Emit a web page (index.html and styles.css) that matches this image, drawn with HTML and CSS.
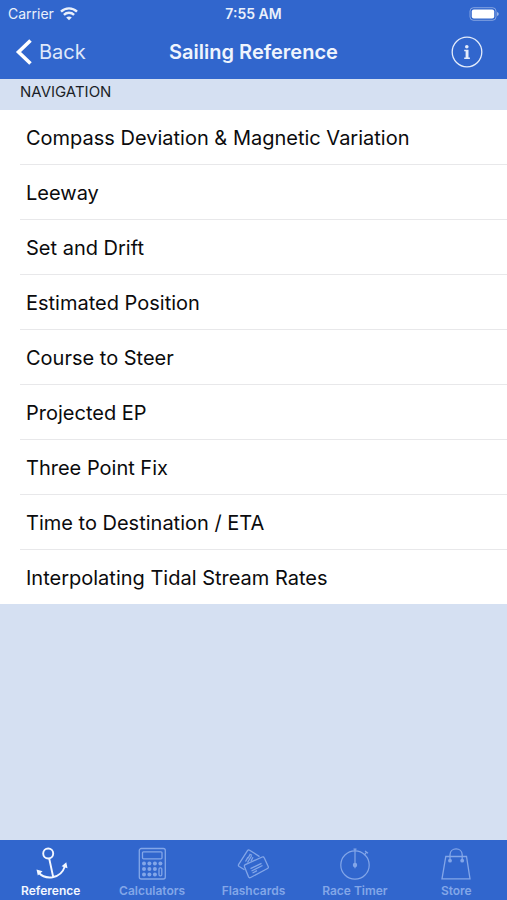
FILE: index.html
```html
<!DOCTYPE html>
<html lang="en">
<head>
<meta charset="utf-8">
<meta name="viewport" content="width=device-width, initial-scale=1">
<title>Sailing Reference</title>
<link rel="stylesheet" href="styles.css">
</head>
<body>
<header class="top">
  <div class="status">
    <div class="carrier">
      <span>Carrier</span>
      <svg width="18" height="14" viewBox="0 0 18 14" fill="none" stroke="currentColor" stroke-width="2.4" aria-hidden="true">
        <path d="M1 4.700C5.500.3 12.500.3 17 4.700"/>
        <path d="M3.900 7.900C6.800 5.100 11.200 5.100 14.100 7.900"/>
        <path d="M9 13.300 6.200 10.500C7.700 9 10.300 9 11.800 10.500Z" fill="currentColor" stroke="none"/>
      </svg>
    </div>
    <span class="time">7:55 AM</span>
    <svg class="battery" width="31" height="14" viewBox="0 0 31 14" aria-hidden="true">
      <rect x="2" y=".7" width="26" height="12.600" rx="3.500" fill="none" stroke="#fff" stroke-opacity=".4"/>
      <rect x="3.800" y="2.500" width="22.400" height="9" rx="2" fill="#fff"/>
      <path d="M29 5v4q1.800-.6 1.800-2t-1.800-2Z" fill="#fff" fill-opacity=".5"/>
    </svg>
  </div>
  <nav class="bar" aria-label="Page">
    <button class="back" type="button">
      <svg width="18" height="28" viewBox="0 0 18 28" fill="none" stroke="currentColor" stroke-width="3.600" aria-hidden="true"><path d="M15.500 2.500 3.500 14l12 11.500"/></svg>
      <span>Back</span>
    </button>
    <h1>Sailing Reference</h1>
    <button class="info" type="button" aria-label="Information">
      <svg width="32" height="32" viewBox="0 0 32 32" aria-hidden="true">
        <circle cx="16" cy="16" r="14.800" fill="none" stroke="currentColor" stroke-width="1.300"/>
        <circle cx="15.800" cy="10.700" r="1.800" fill="currentColor"/>
        <path d="M13.200 13.800h4.300v7.700h1.400v1.400h-5.700v-1.400h1.400v-6.300h-1.400Z" fill="currentColor"/>
      </svg>
    </button>
  </nav>
</header>
<main>
  <h2>NAVIGATION</h2>
  <ul class="topics">
    <li><a href="#">Compass Deviation &amp; Magnetic Variation</a></li>
    <li><a href="#">Leeway</a></li>
    <li><a href="#">Set and Drift</a></li>
    <li><a href="#">Estimated Position</a></li>
    <li><a href="#">Course to Steer</a></li>
    <li><a href="#">Projected EP</a></li>
    <li><a href="#">Three Point Fix</a></li>
    <li><a href="#">Time to Destination / ETA</a></li>
    <li><a href="#">Interpolating Tidal Stream Rates</a></li>
  </ul>
</main>
<nav class="tabs" aria-label="Sections">
  <a class="tab active" href="#" aria-current="page">
    <svg width="34" height="34" viewBox="0 0 34 34" fill="none" stroke="currentColor" stroke-width="1.900" aria-hidden="true">
      <circle cx="14.200" cy="6.500" r="5"/>
      <path d="M15.200 11.500 19.300 30.500M4.500 25.500C11 32.700 26.500 33 31 19"/>
      <path d="M2.500 22.500 8.600 24.300 3.800 28.500ZM27.600 19.200 32.300 15.300 33.500 21.300Z" fill="currentColor" stroke="none"/>
    </svg>
    <span>Reference</span>
  </a>
  <a class="tab" href="#">
    <svg width="34" height="34" viewBox="0 0 34 34" fill="none" stroke="currentColor" stroke-width="1.300" aria-hidden="true">
      <rect x="4.300" y="1.500" width="26" height="30.500" rx="2"/>
      <rect x="7.500" y="4.800" width="19.500" height="7" rx="1"/>
      <g fill="currentColor" stroke="none">
        <circle cx="9" cy="16.500" r="2"/><circle cx="14.400" cy="16.500" r="2"/><circle cx="19.900" cy="16.500" r="2"/><circle cx="25.400" cy="16.500" r="2"/>
        <circle cx="9" cy="22" r="2"/><circle cx="14.400" cy="22" r="2"/><circle cx="19.900" cy="22" r="2"/>
        <circle cx="9" cy="27.500" r="2"/><circle cx="14.400" cy="27.500" r="2"/><circle cx="19.900" cy="27.500" r="2"/>
      </g>
      <rect x="24" y="20.800" width="2.800" height="8" rx="1.200"/>
    </svg>
    <span>Calculators</span>
  </a>
  <a class="tab" href="#">
    <svg width="34" height="34" viewBox="0 0 34 34" fill="none" stroke="currentColor" stroke-width="1.300" stroke-linejoin="round" aria-hidden="true">
      <path d="M8.500 22.800 3.200 19.500Q1.900 18.600 2.700 17.400L11.500 3.700Q12.300 2.400 13.600 3.200L23.500 9.600"/>
      <path d="M9.300 17.700 26.200 10Q27.600 9.400 28.200 10.800L32.200 19.500Q32.800 20.900 31.500 21.500L14.600 30.500Q13.200 31.200 12.500 29.800L8.500 19.800Q8 18.300 9.300 17.700Z"/>
      <path d="M9.500 14.500 12 10.200M11.500 15.500 15.500 9M14.300 7.200 11.800 11.500M15 14 17 10.200M13.500 7 16 8.300M14.500 21.700 25.500 16.300M15.500 24 26.500 18.500M16.500 26 21 23.700"/>
    </svg>
    <span>Flashcards</span>
  </a>
  <a class="tab" href="#">
    <svg width="34" height="34" viewBox="0 0 34 34" fill="none" stroke="currentColor" stroke-width="1.200" aria-hidden="true">
      <circle cx="17" cy="18" r="14.200"/>
      <path d="M17 1.500V18M15.500 2.200h3M26.300 8.200 28.500 5.200M27 4l3 2.300"/>
      <circle cx="17" cy="18" r="1.600" fill="currentColor"/>
      <path d="M17 18v3.200"/>
    </svg>
    <span>Race Timer</span>
  </a>
  <a class="tab" href="#">
    <svg width="34" height="34" viewBox="0 0 34 34" fill="none" stroke="currentColor" stroke-width="1.300" aria-hidden="true">
      <path d="M6.800 9.500H27.500L31 31.800H3ZM11 13V7.800C11 0 23.200 0 23.200 7.800V13"/>
      <circle cx="11" cy="13.700" r="1.900" fill="currentColor" stroke="none"/>
      <circle cx="23.200" cy="13.700" r="1.900" fill="currentColor" stroke="none"/>
    </svg>
    <span>Store</span>
  </a>
</nav>
</body>
</html>
```

FILE: styles.css
```css
* {
  box-sizing: border-box;
}

body {
  margin: 0;
  min-height: 100vh;
  display: flex;
  flex-direction: column;
  background: #d5e0f2;
  color: #0b0b0d;
  font-family: Inter, "Liberation Sans", sans-serif;
}

svg {
  display: block;
}

a {
  color: inherit;
  text-decoration: none;
}

button {
  padding: 0;
  border: 0;
  background: none;
  color: inherit;
  font: inherit;
}

.top {
  background: #3166cd;
  color: #fff;
}

.status,
.bar {
  display: grid;
  grid-template-columns: 1fr auto 1fr;
  align-items: center;
}

.status {
  height: 27px;
  padding: 0 8px;
  font-size: 14px;
}

.carrier {
  display: flex;
  align-items: center;
  gap: 6px;
  color: #eaf0fb;
}

.time {
  font-weight: 600;
  color: #eaf0fb;
}

.battery {
  justify-self: end;
}

.bar {
  height: 52px;
  padding: 0 15px 2px;
}

.back {
  display: flex;
  align-items: center;
  gap: 6px;
  font-size: 20px;
  color: #fff;
}

.back span {
  color: #dfe8fa;
}

h1 {
  margin: 0;
  font-size: 20px;
  font-weight: 600;
  color: #eff4fd;
}

.info {
  justify-self: end;
  margin-right: 9px;
  color: #e4ecfb;
}

h2 {
  height: 31px;
  margin: 0;
  padding: 3px 20px;
  font-size: 15px;
  font-weight: 400;
  line-height: 20px;
  color: #1b1f28;
}

.topics {
  margin: 0;
  padding: 0 0 0 20px;
  list-style: none;
  background: #fff;
}

.topics li + li {
  border-top: 1px solid #e8e8ea;
}

.topics a {
  display: block;
  padding: 15px 6px 13px;
  font-size: 20px;
  line-height: 26px;
}

.tabs {
  display: grid;
  grid-template-columns: repeat(5, 1fr);
  height: 60px;
  margin-top: auto;
  background: #3166cd;
  color: #83a6e8;
}

.tab {
  display: flex;
  flex-direction: column;
  align-items: center;
  padding-top: 7px;
  gap: 2px;
  font-size: 12px;
  font-weight: 600;
  line-height: 16px;
}

.active {
  color: #f3f7ff;
}
```
